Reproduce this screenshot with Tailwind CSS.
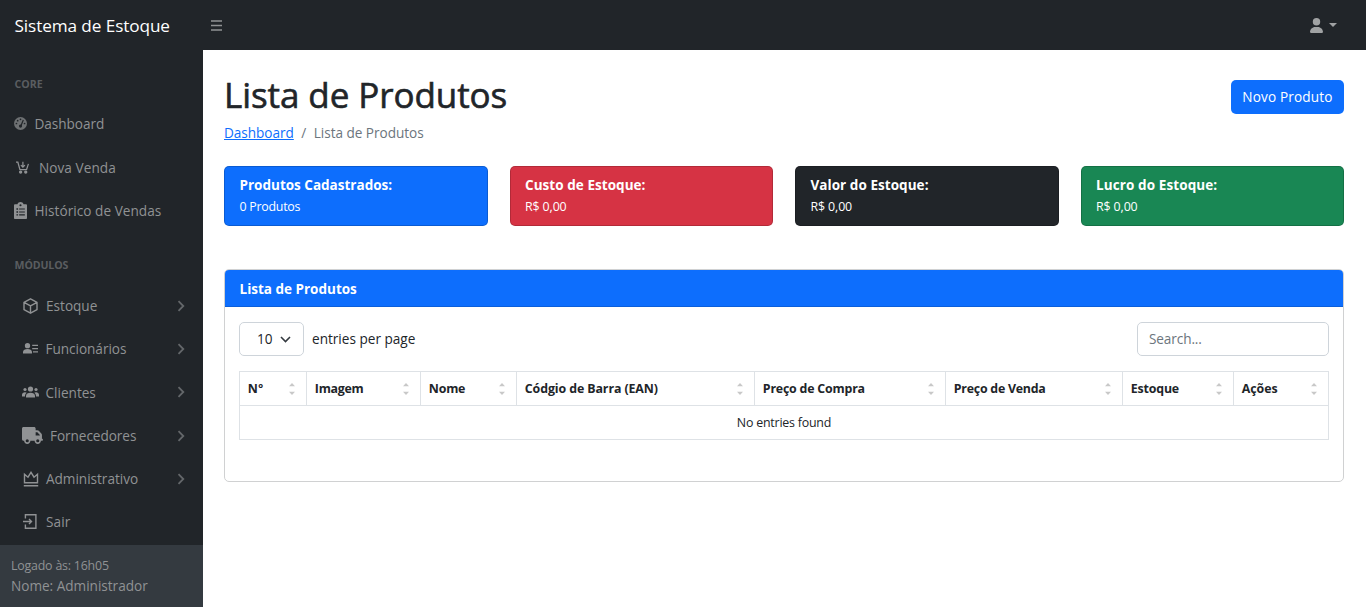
<!DOCTYPE html>
<html lang="pt-br">
<head>
<meta charset="utf-8">
<title>Lista de Produtos</title>
<script src="https://cdn.jsdelivr.net/npm/@tailwindcss/browser@4"></script>
</head>
<body class="h-[607px] overflow-hidden bg-white font-['Open_Sans','Segoe_UI',sans-serif] text-[13.6px] leading-[21px] text-[#212529]">
<svg class="hidden">
  <symbol id="chev" viewBox="0 0 8 12"><path d="M1.500 1.200l4.800 4.800-4.800 4.800" fill="none" stroke="currentColor" stroke-width="1.800"/></symbol>
  <symbol id="sort" viewBox="0 0 6 12"><path d="M0 3.200L3 0l3 3.200zM0 8.800h6L3 12z" fill="currentColor"/></symbol>
</svg>
<header class="flex h-[50px] items-center bg-[#212529]">
  <a class="w-[203px] pt-px pl-[14.500px] text-[17.2px] leading-[26px] tracking-[-0.1px] text-white">Sistema de Estoque</a>
  <svg class="ml-2 h-[11px] w-[11px] text-[#909294]" viewBox="0 0 11 11"><path d="M0 1h11M0 5.500h11M0 10h11" stroke="currentColor" stroke-width="1.300"/></svg>
  <div class="ml-auto mr-[29px] flex items-center gap-[6px] text-[#a0a2a3]">
    <svg class="h-[15px] w-[13px]" viewBox="0 0 448 512" fill="currentColor"><path d="M224 256a128 128 0 1 0 0-256 128 128 0 1 0 0 256zm-45.700 48C79.800 304 0 383.800 0 482.300 0 498.700 13.300 512 29.700 512h388.600c16.400 0 29.700-13.300 29.700-29.700C448 383.800 368.200 304 269.700 304z"/></svg>
    <svg class="h-1 w-2" viewBox="0 0 8 4" fill="currentColor"><path d="M0 0h8L4 4z"/></svg>
  </div>
</header>
<div class="flex h-[557px]">
  <aside class="flex w-[203px] shrink-0 flex-col bg-[#212529] text-[#909294]">
    <nav class="flex grow flex-col">
      <div class="h-[52.400px] pt-[24px] pl-[14.500px] text-[10.600px] leading-[20px] font-bold text-[#5a5d60]">CORE</div>
      <a class="flex h-[43.200px] items-center pl-[14px] tracking-[-.04px]"><svg class="mr-[7.500px] h-[13px] w-[13px] text-[#6e7173]" viewBox="0 0 512 512"><circle cx="256" cy="256" r="256" fill="currentColor"/><g fill="#212529"><circle cx="256" cy="92" r="34"/><circle cx="144" cy="144" r="34"/><circle cx="96" cy="256" r="34"/><circle cx="416" cy="256" r="34"/><circle cx="256" cy="358" r="62"/><path d="M345 112l44 19-97 230-44-19z"/></g></svg>Dashboard</a>
      <a class="flex h-[43.200px] items-center pl-[16px] tracking-[.05px]"><svg class="mr-[10px] h-[13px] w-[13px]" viewBox="0 0 16 16" fill="none" stroke="currentColor" stroke-width="1.500"><path d="M0 1.500h2.300l2.500 9h8.200l2.300-7M8.500 1v6M6 5l2.500 2.500L11 5"/><circle cx="5.700" cy="13.600" r="1.300" fill="currentColor"/><circle cx="12" cy="13.600" r="1.300" fill="currentColor"/></svg>Nova Venda</a>
      <a class="flex h-[43.200px] items-center pl-[14px] tracking-[.04px]"><svg class="mr-[7.500px] h-[17px] w-[13px]" viewBox="0 0 384 512" preserveAspectRatio="none" fill="currentColor"><path fill-rule="evenodd" d="M192 0c-41.800 0-77.400 26.700-90.500 64H32C14 64 0 78 0 96v384c0 18 14 32 32 32h320c18 0 32-14 32-32V96c0-18-14-32-32-32h-69.500C269.400 26.700 233.800 0 192 0zm0 64a32 32 0 1 1 0 64 32 32 0 1 1 0-64zM72 190h48v44H72zm80 5h168v34H152zM72 278h48v44H72zm80 5h168v34H152zM72 366h48v44H72zm80 5h168v34H152z"/></svg>Histórico de Vendas</a>
      <div class="h-[52.400px] pt-[23.500px] pl-[14.500px] text-[10.600px] leading-[20px] font-bold tracking-[-.1px] text-[#5a5d60]">MÓDULOS</div>
      <a class="flex h-[43.200px] items-center pr-[18px] pl-[23px]"><svg class="mr-[8px] h-[16px] w-[15px]" viewBox="0 0 15 16" fill="none" stroke="currentColor" stroke-width="1.400" stroke-linejoin="round"><path d="M7.500.800l6.500 3.500v7.400l-6.500 3.500L1 11.700V4.300zM1 4.300l6.500 3.500L14 4.300M7.500 7.800v7.400"/></svg>Estoque<svg class="ml-auto h-3 w-2 text-[#64676a]"><use href="#chev"/></svg></a>
      <a class="flex h-[43.200px] items-center pr-[18px] pb-px pl-[23px] tracking-[-.04px]"><svg class="mr-[7.500px] h-[11px] w-[15px]" viewBox="0 0 15 11" fill="currentColor"><path d="M4.500 0a2.600 2.600 0 1 1 0 5.300 2.600 2.600 0 0 1 0-5.300zM0 10.500V9c0-1.800 2-2.900 4.500-2.900S9 7.200 9 9v1.500zM9.200 1.800H15V3H9.200zM9.200 5H15v1.200H9.200zM10 8.200h5v1.200h-5z"/></svg>Funcionários<svg class="ml-auto h-3 w-2 text-[#64676a]"><use href="#chev"/></svg></a>
      <a class="flex h-[43.200px] items-center pr-[18px] pl-[22px]"><svg class="mr-[6.500px] h-[12px] w-[17px]" viewBox="0 0 17 12" fill="currentColor"><circle cx="8.500" cy="3" r="2.600"/><circle cx="3" cy="3.500" r="1.600"/><circle cx="14" cy="3.500" r="1.600"/><path d="M4 11.500V10c0-2 2-3.200 4.500-3.200S13 8 13 10v1.500zM0 10.500V8.700C0 7.200 1.300 6.300 3 6.300c.700 0 1.300.200 1.700.400C3.500 7.500 3 8.700 3 10.500zM17 10.500V8.700c0-1.500-1.300-2.400-3-2.400-.700 0-1.300.200-1.700.400 1.200.800 1.700 2 1.700 3.800z"/></svg>Clientes<svg class="ml-auto h-3 w-2 text-[#64676a]"><use href="#chev"/></svg></a>
      <a class="flex h-[43.200px] items-center pr-[18px] pl-[22px] tracking-[-.06px]"><svg class="mr-[7px] h-[17px] w-[21px]" viewBox="0 0 640 512" fill="currentColor"><path d="M48 0C21.500 0 0 21.500 0 48v320c0 26.500 21.500 48 48 48h16c0 53 43 96 96 96s96-43 96-96h128c0 53 43 96 96 96s96-43 96-96h32c17.700 0 32-14.300 32-32s-14.300-32-32-32V237.300c0-17-6.700-33.300-18.700-45.300L512 114.700c-12-12-28.300-18.700-45.300-18.700H416V48c0-26.500-21.500-48-48-48zm368 160h50.700L544 237.300V256H416zM112 416a48 48 0 1 1 96 0 48 48 0 1 1-96 0zm368-48a48 48 0 1 1 0 96 48 48 0 1 1 0-96z"/></svg>Fornecedores<svg class="ml-auto h-3 w-2 text-[#64676a]"><use href="#chev"/></svg></a>
      <a class="flex h-[43.200px] items-center pr-[18px] pl-[23px] tracking-[-.02px]"><svg class="mr-[7px] h-[16px] w-[16px]" viewBox="0 0 16 16" fill="none" stroke="currentColor" stroke-width="1.400"><path d="M1.500 11.800V3.200l3.500 3L8 1.300l3 4.900 3.500-3v8.600zM.800 14.800h14.400"/></svg>Administrativo<svg class="ml-auto h-3 w-2 text-[#64676a]"><use href="#chev"/></svg></a>
      <a class="flex h-[43.200px] items-center pl-[23px] tracking-[.1px]"><svg class="mr-[8px] h-[15px] w-[15px]" viewBox="0 0 15 15" fill="none" stroke="currentColor" stroke-width="1.400"><path d="M2.400 4.500V.800h10.500v13.400H2.400v-3.700M0 7.500h8M6 5l2.500 2.500L6 10"/></svg>Sair</a>
    </nav>
    <div class="h-[62px] bg-[#343a40] pt-[11px] pl-[11px]">
      <div class="text-[12.400px] leading-[20px] tracking-[-.2px]">Logado às: 16h05</div>
      <div class="leading-[20px] tracking-[-.01px]">Nome: Administrador</div>
    </div>
  </aside>
  <main class="grow px-[21px]">
    <div class="flex justify-between pr-px">
      <h1 class="pt-[23px] text-[35px] leading-[43px] font-medium tracking-[-.08px] [-webkit-text-stroke:.6px_#212529]">Lista de Produtos</h1>
      <button class="mt-[30px] h-[34px] w-[113px] rounded-[5px] bg-[#0d6efd] px-0 pb-[2px] tracking-[.15px] text-white">Novo Produto</button>
    </div>
    <div class="mt-[6px] flex h-[21px] tracking-[-.04px] text-[#6c757d]"><a class="text-[#0d6efd] underline">Dashboard</a><span class="w-[20px] text-center">/</span><span>Lista de Produtos</span></div>
    <div class="mt-[23px] grid grid-cols-4 gap-x-[22px] pr-px text-[12.400px] text-white">
      <div class="h-[60px] rounded-[5px] border border-black/17 bg-[#0d6efd] px-[14.500px] pt-2"><div class="text-[13.500px] font-bold">Produtos Cadastrados:</div><div class="tracking-[-.25px]">0 Produtos</div></div>
      <div class="h-[60px] rounded-[5px] border border-black/17 bg-[#d63344] px-[14.500px] pt-2"><div class="text-[13.500px] font-bold tracking-[.05px]">Custo de Estoque:</div><div class="tracking-[-.12px]">R$ 0,00</div></div>
      <div class="h-[60px] rounded-[5px] border border-black/17 bg-[#212529] px-[14.500px] pt-2"><div class="text-[13.500px] font-bold tracking-[.05px]">Valor do Estoque:</div><div class="tracking-[-.12px]">R$ 0,00</div></div>
      <div class="h-[60px] rounded-[5px] border border-black/17 bg-[#198754] px-[14.500px] pt-2"><div class="text-[13.500px] font-bold tracking-[.1px]">Lucro do Estoque:</div><div class="tracking-[-.12px]">R$ 0,00</div></div>
    </div>
    <section class="mt-[43px] mr-px h-[213px] overflow-hidden rounded-[5px] border border-[#d0d1d2]">
      <div class="h-[37px] border-b border-[#0b5fda] bg-[#0d6efd] pt-[9px] pl-[14.500px] text-[13.500px] leading-[20px] font-bold text-white">Lista de Produtos</div>
      <div class="px-[14px] pt-[15px]">
        <div class="flex h-[34px] items-center">
          <div class="flex h-[34px] w-[65px] items-center rounded-[5px] border border-[#ced4da] pl-[17px]"><span class="pb-[2px]">10</span><svg class="ml-[7px] h-[7px] w-[11px]" viewBox="0 0 11 7"><path d="M1 1l4.500 4.500L10 1" fill="none" stroke="#343a40" stroke-width="1.600"/></svg></div>
          <span class="ml-2 pb-[2px]">entries per page</span>
          <input class="ml-auto h-[34px] w-[192px] rounded-[5px] border border-[#ced4da] px-[11px] pb-[2px] tracking-[-.11px] placeholder:text-[#6c757d]" placeholder="Search...">
        </div>
        <table class="mt-[15px] w-[1090px] table-fixed border-collapse text-[12.400px] leading-[21px] [&_td]:border [&_td]:border-[#dee2e6] [&_th]:border [&_th]:border-[#dee2e6] [&_th]:p-0 [&_th]:pr-[11px] [&_th]:pl-[7.800px] [&_th]:text-left">
          <colgroup><col class="w-[67px]"><col class="w-[114px]"><col class="w-[96px]"><col class="w-[238px]"><col class="w-[191px]"><col class="w-[177px]"><col class="w-[111px]"><col class="w-[95px]"></colgroup>
          <thead><tr class="h-[34px]">
            <th><div class="flex items-center justify-between tracking-[.4px]">Nº<svg class="h-3 w-1.5 text-[#c8c8c8]"><use href="#sort"/></svg></div></th>
            <th><div class="flex items-center justify-between tracking-[-.25px]">Imagem<svg class="h-3 w-1.5 text-[#c8c8c8]"><use href="#sort"/></svg></div></th>
            <th><div class="flex items-center justify-between tracking-[-.2px]">Nome<svg class="h-3 w-1.5 text-[#c8c8c8]"><use href="#sort"/></svg></div></th>
            <th><div class="flex items-center justify-between tracking-[-.1px]">Códgio de Barra (EAN)<svg class="h-3 w-1.5 text-[#c8c8c8]"><use href="#sort"/></svg></div></th>
            <th><div class="flex items-center justify-between tracking-[-.2px]">Preço de Compra<svg class="h-3 w-1.5 text-[#c8c8c8]"><use href="#sort"/></svg></div></th>
            <th><div class="flex items-center justify-between tracking-[-.25px]">Preço de Venda<svg class="h-3 w-1.5 text-[#c8c8c8]"><use href="#sort"/></svg></div></th>
            <th><div class="flex items-center justify-between tracking-[-.18px]">Estoque<svg class="h-3 w-1.5 text-[#c8c8c8]"><use href="#sort"/></svg></div></th>
            <th><div class="flex items-center justify-between tracking-[-.06px]">Ações<svg class="h-3 w-1.5 text-[#c8c8c8]"><use href="#sort"/></svg></div></th>
          </tr></thead>
          <tbody><tr class="h-[34px]"><td colspan="8" class="text-center tracking-[-.21px]">No entries found</td></tr></tbody>
        </table>
      </div>
    </section>
  </main>
</div>
</body></html>
